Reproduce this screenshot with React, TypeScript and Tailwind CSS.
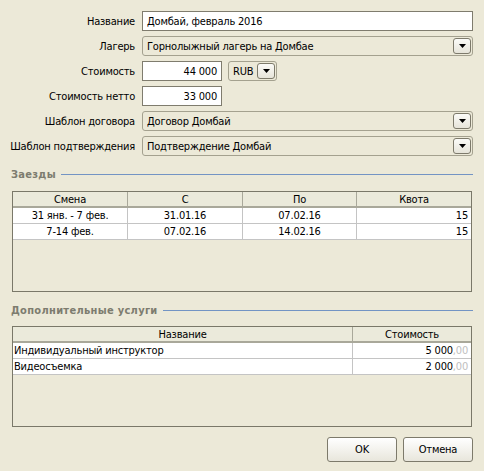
import React from 'react';

const Arrow = () => (
  <svg width="7" height="4" viewBox="0 0 7 4" className="block">
    <path d="M0 0h7L3.5 4z" fill="#000" />
  </svg>
);

const Combo = ({ value, className = '' }: { value: string; className?: string }) => (
  <div
    className={`h-[20px] flex items-center border border-[#a4a18f] rounded-[3px] bg-[#ece9d8] pl-[4px] pr-px ${className}`}
  >
    <span className="flex-1 truncate">{value}</span>
    <div className="w-[18px] h-[16px] flex items-center justify-center border border-[#7d7a6b] rounded-[3px] bg-gradient-to-b from-[#fbfbf8] to-[#e6e4d9]">
      <Arrow />
    </div>
  </div>
);

const Input = ({ value, right, className = '' }: { value: string; right?: boolean; className?: string }) => (
  <div
    className={`h-[20px] flex items-center border border-[#7f7c6e] bg-white px-[4px] ${right ? 'justify-end' : ''} ${className}`}
  >
    {value}
  </div>
);

const Label = ({ children }: { children: React.ReactNode }) => (
  <div className="h-[20px] flex items-center justify-end whitespace-nowrap">{children}</div>
);

const Section = ({ title }: { title: string }) => (
  <div className="flex items-center h-[13px] gap-[5px]">
    <span className="font-bold tracking-[0.3px] text-[#7d7c6f] whitespace-nowrap">{title}</span>
    <div className="flex-1 h-px bg-[#7394c4]" />
  </div>
);

const stays = [
  { name: '31 янв. - 7 фев.', from: '31.01.16', to: '07.02.16', quota: '15' },
  { name: '7-14 фев.', from: '07.02.16', to: '14.02.16', quota: '15' },
];

const services = [
  { name: 'Индивидуальный инструктор', price: '5 000' },
  { name: 'Видеосъемка', price: '2 000' },
];

export default function App() {
  return (
    <div className="w-[484px] h-[471px] bg-[#ece9d8] text-black text-[11px] leading-none tracking-[-0.2px] font-['DejaVu_Sans_Condensed','DejaVu_Sans',sans-serif] pt-[11px] px-[11px] flex flex-col">
      {/* form */}
      <div className="grid grid-cols-[124px_1fr] gap-x-[7px] gap-y-[5px]">
        <Label>Название</Label>
        <Input value="Домбай, февраль 2016" />

        <Label>Лагерь</Label>
        <Combo value="Горнолыжный лагерь на Домбае" />

        <Label>Стоимость</Label>
        <div className="flex gap-[6px]">
          <Input value="44 000" right className="w-[80px]" />
          <Combo value="RUB" className="w-[49px] pl-[3px]" />
        </div>

        <Label>Стоимость нетто</Label>
        <Input value="33 000" right className="w-[80px]" />

        <Label>Шаблон договора</Label>
        <Combo value="Договор Домбай" />

        <Label>Шаблон подтверждения</Label>
        <Combo value="Подтверждение Домбай" />
      </div>

      <div className="mt-[12px]">
        <Section title="Заезды" />
      </div>

      {/* stays table */}
      <div className="mt-[10px] mx-px h-[101px] border border-[#7a7869] flex flex-col">
        <div className="grid grid-cols-[115px_115px_114px_1fr] h-[16px] bg-[#ebeadb] border-b-2 border-[#a9a89a]">
          <div className="flex items-center justify-center border-r border-[#a9a89a]">Смена</div>
          <div className="flex items-center justify-center border-r border-[#a9a89a]">С</div>
          <div className="flex items-center justify-center border-r border-[#a9a89a]">По</div>
          <div className="flex items-center justify-center">Квота</div>
        </div>
        {stays.map((s) => (
          <div key={s.name} className="grid grid-cols-[115px_115px_114px_1fr] h-[16px] bg-white border-b border-[#c4c4c4]">
            <div className="flex items-center justify-center border-r border-[#c4c4c4]">{s.name}</div>
            <div className="flex items-center justify-center border-r border-[#c4c4c4]">{s.from}</div>
            <div className="flex items-center justify-center border-r border-[#c4c4c4]">{s.to}</div>
            <div className="flex items-center justify-end pr-[3px]">{s.quota}</div>
          </div>
        ))}
      </div>

      <div className="mt-[12px]">
        <Section title="Дополнительные услуги" />
      </div>

      {/* services table */}
      <div className="mt-[9px] mx-px h-[101px] border border-[#7a7869] flex flex-col">
        <div className="grid grid-cols-[340px_1fr] h-[16px] bg-[#ebeadb] border-b-2 border-[#a9a89a]">
          <div className="flex items-center justify-center border-r border-[#a9a89a]">Название</div>
          <div className="flex items-center justify-center">Стоимость</div>
        </div>
        {services.map((s) => (
          <div key={s.name} className="grid grid-cols-[340px_1fr] h-[16px] bg-white border-b border-[#c4c4c4]">
            <div className="flex items-center pl-px border-r border-[#c4c4c4]">{s.name}</div>
            <div className="flex items-center justify-end pr-[3px]">
              {s.price}
              <span className="text-[#c0c0c0]">,00</span>
            </div>
          </div>
        ))}
      </div>

      {/* buttons */}
      <div className="mt-[10px] flex justify-end gap-[6px]">
        <button className="w-[70px] h-[25px] rounded-[3px] border border-[#7d7a6b] bg-gradient-to-b from-white to-[#e8e6dc]">
          OK
        </button>
        <button className="w-[70px] h-[25px] rounded-[3px] border border-[#7d7a6b] bg-gradient-to-b from-white to-[#e8e6dc]">
          Отмена
        </button>
      </div>
    </div>
  );
}
